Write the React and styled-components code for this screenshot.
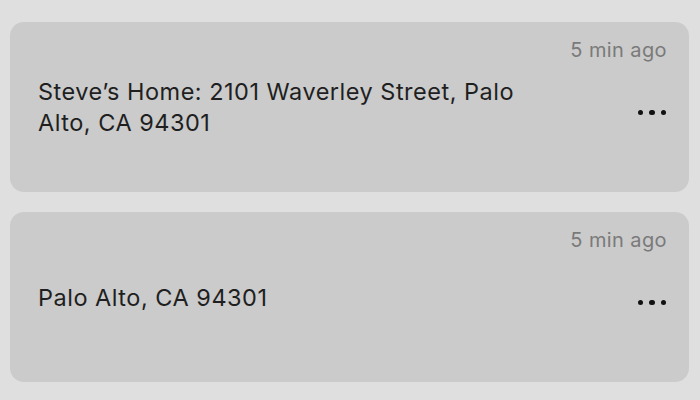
import React from "react";
import styled, { createGlobalStyle } from "styled-components";

const Global = createGlobalStyle`
  html, body {
    margin: 0;
    padding: 0;
    background: #dfdfdf;
  }
  body {
    font-family: Inter, "Noto Sans", "Liberation Sans", sans-serif;
    -webkit-font-smoothing: antialiased;
  }
`;

const List = styled.div`
  display: flex;
  flex-direction: column;
  gap: 20px;
  padding: 22px 11px 18px 10px;
`;

const Card = styled.div`
  height: 170px;
  box-sizing: border-box;
  background: #cbcbcb;
  border-radius: 14px;
  display: flex;
  flex-direction: column;
  padding: 16px 22px 40px 28px;
`;

const Header = styled.div`
  display: flex;
  justify-content: flex-end;
  height: 24px;
`;

const Time = styled.span`
  font-size: 20px;
  letter-spacing: 0.4px;
  color: #7a7a7a;
  line-height: 24px;
`;

const Body = styled.div`
  flex: 1;
  display: flex;
  align-items: center;
  justify-content: space-between;
`;

const Address = styled.div`
  max-width: 500px;
  font-size: 23.5px;
  letter-spacing: 0.5px;
  line-height: 31px;
  color: #1f1f1f;
`;

const Dots = styled.div`
  display: flex;
  gap: 6px;
  margin-top: 11px;
  margin-right: 1px;
`;

const Dot = styled.span`
  width: 5.5px;
  height: 5.5px;
  border-radius: 50%;
  background: #111;
`;

const items = [
  { time: "5 min ago", text: "Steve’s Home: 2101 Waverley Street, Palo Alto, CA 94301" },
  { time: "5 min ago", text: "Palo Alto, CA 94301" },
];

export default function App() {
  return (
    <>
      <Global />
      <List>
        {items.map((it, i) => (
          <Card key={i}>
            <Header>
              <Time>{it.time}</Time>
            </Header>
            <Body>
              <Address>{it.text}</Address>
              <Dots>
                <Dot />
                <Dot />
                <Dot />
              </Dots>
            </Body>
          </Card>
        ))}
      </List>
    </>
  );
}
